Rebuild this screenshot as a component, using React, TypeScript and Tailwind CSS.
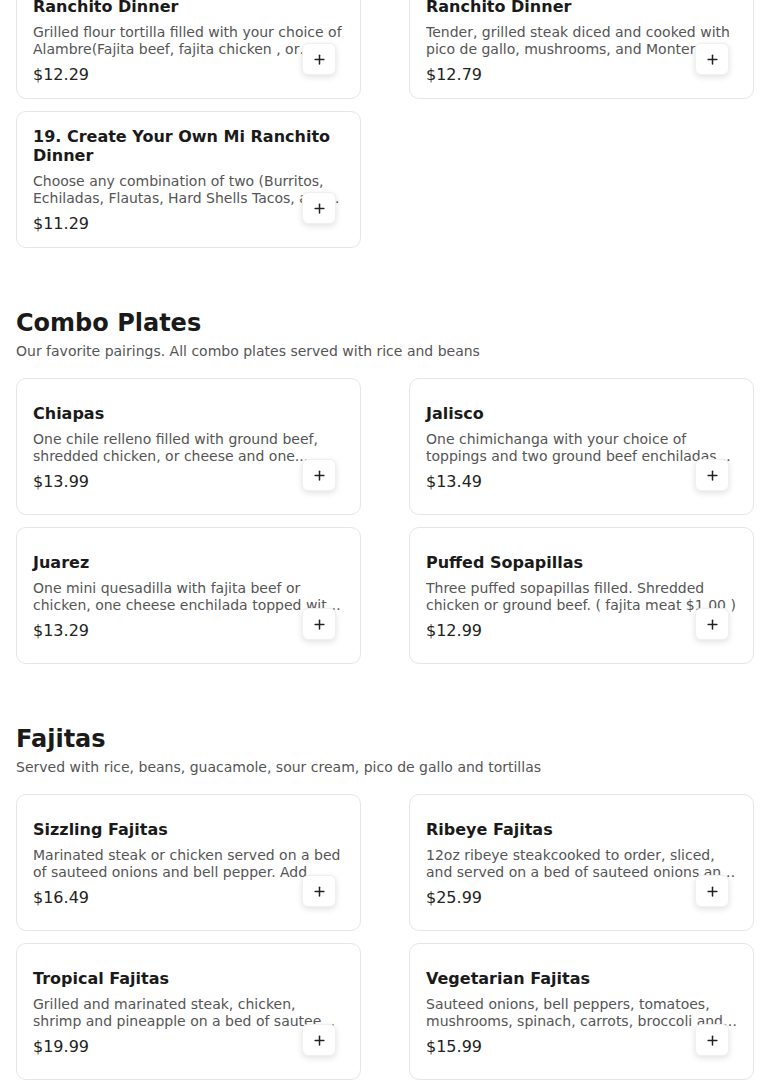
import { Plus } from "lucide-react";

type Item = { name: string; desc: string; price: string };

const dinners: Item[] = [
  {
    name: "17. Alambre Mixto Especial Mi Ranchito Dinner",
    desc: "Grilled flour tortilla filled with your choice of Alambre(Fajita beef, fajita chicken , or shrimp) with bell peppers, onions and cheese.",
    price: "$12.29",
  },
  {
    name: "18. Steak a la Mexicana Mi Ranchito Dinner",
    desc: "Tender, grilled steak diced and cooked with pico de gallo, mushrooms, and Monterey Jack cheese.",
    price: "$12.79",
  },
  {
    name: "19. Create Your Own Mi Ranchito Dinner",
    desc: "Choose any combination of two (Burritos, Echiladas, Flautas, Hard Shells Tacos, and Tostadas).",
    price: "$11.29",
  },
];

const combos: Item[] = [
  {
    name: "Chiapas",
    desc: "One chile relleno filled with ground beef, shredded chicken, or cheese and one... ",
    price: "$13.99",
  },
  {
    name: "Jalisco",
    desc: "One chimichanga with your choice of toppings and two ground beef enchiladas topped with cheese.",
    price: "$13.49",
  },
  {
    name: "Juarez",
    desc: "One mini quesadilla with fajita beef or chicken, one cheese enchilada topped with chili con carne.",
    price: "$13.29",
  },
  {
    name: "Puffed Sopapillas",
    desc: "Three puffed sopapillas filled. Shredded chicken or ground beef. ( fajita meat $1.00 )",
    price: "$12.99",
  },
];

const fajitas: Item[] = [
  {
    name: "Sizzling Fajitas",
    desc: "Marinated steak or chicken served on a bed of sauteed onions and bell pepper. Add shrimp for extra.",
    price: "$16.49",
  },
  {
    name: "Ribeye Fajitas",
    desc: "12oz ribeye steakcooked to order, sliced, and served on a bed of sauteed onions and bell peppers.",
    price: "$25.99",
  },
  {
    name: "Tropical Fajitas",
    desc: "Grilled and marinated steak, chicken, shrimp and pineapple on a bed of sauteed onions and bell peppers.",
    price: "$19.99",
  },
  {
    name: "Vegetarian Fajitas",
    desc: "Sauteed onions, bell peppers, tomatoes, mushrooms, spinach, carrots, broccoli and zucchini.",
    price: "$15.99",
  },
];

function MenuCard({ item }: { item: Item }) {
  return (
    <div className="relative flex h-[137px] flex-col justify-center rounded-[10px] border border-[#e6e6e6] bg-white px-4 pt-[4px]">
      <h3 className="text-base font-bold leading-[19px] text-[#1a1a1a]">
        {item.name}
      </h3>
      <p className="mt-2 line-clamp-2 text-sm leading-[17px] text-[#555555]">
        {item.desc}
      </p>
      <p className="mt-[5px] text-base leading-6 text-[#222222]">{item.price}</p>
      <button className="absolute bottom-[23px] right-6 flex h-8 w-[34px] items-center justify-center rounded-md border border-[#f0f0f0] bg-white text-[#222] shadow-[0_2px_6px_rgba(0,0,0,0.12)]">
        <Plus size={15} strokeWidth={2.4} />
      </button>
    </div>
  );
}

function Section({
  title,
  subtitle,
  items,
}: {
  title: string;
  subtitle: string;
  items: Item[];
}) {
  return (
    <section className="mt-[59px]">
      <h2 className="text-2xl font-bold leading-8 text-[#1a1a1a]">{title}</h2>
      <p className="mt-[2px] text-sm leading-5 text-[#555555]">{subtitle}</p>
      <div className="mt-[17px] grid grid-cols-2 gap-x-12 gap-y-3">
        {items.map((it) => (
          <MenuCard key={it.name} item={it} />
        ))}
      </div>
    </section>
  );
}

export default function App() {
  return (
    <div className="h-[1089px] overflow-hidden bg-white px-4 font-['DejaVu_Sans',sans-serif]">
      <div className="-mt-[38px] grid grid-cols-2 gap-x-12 gap-y-3">
        {dinners.map((it) => (
          <MenuCard key={it.name} item={it} />
        ))}
      </div>
      <Section
        title="Combo Plates"
        subtitle="Our favorite pairings. All combo plates served with rice and beans"
        items={combos}
      />
      <Section
        title="Fajitas"
        subtitle="Served with rice, beans, guacamole, sour cream, pico de gallo and tortillas"
        items={fajitas}
      />
    </div>
  );
}
